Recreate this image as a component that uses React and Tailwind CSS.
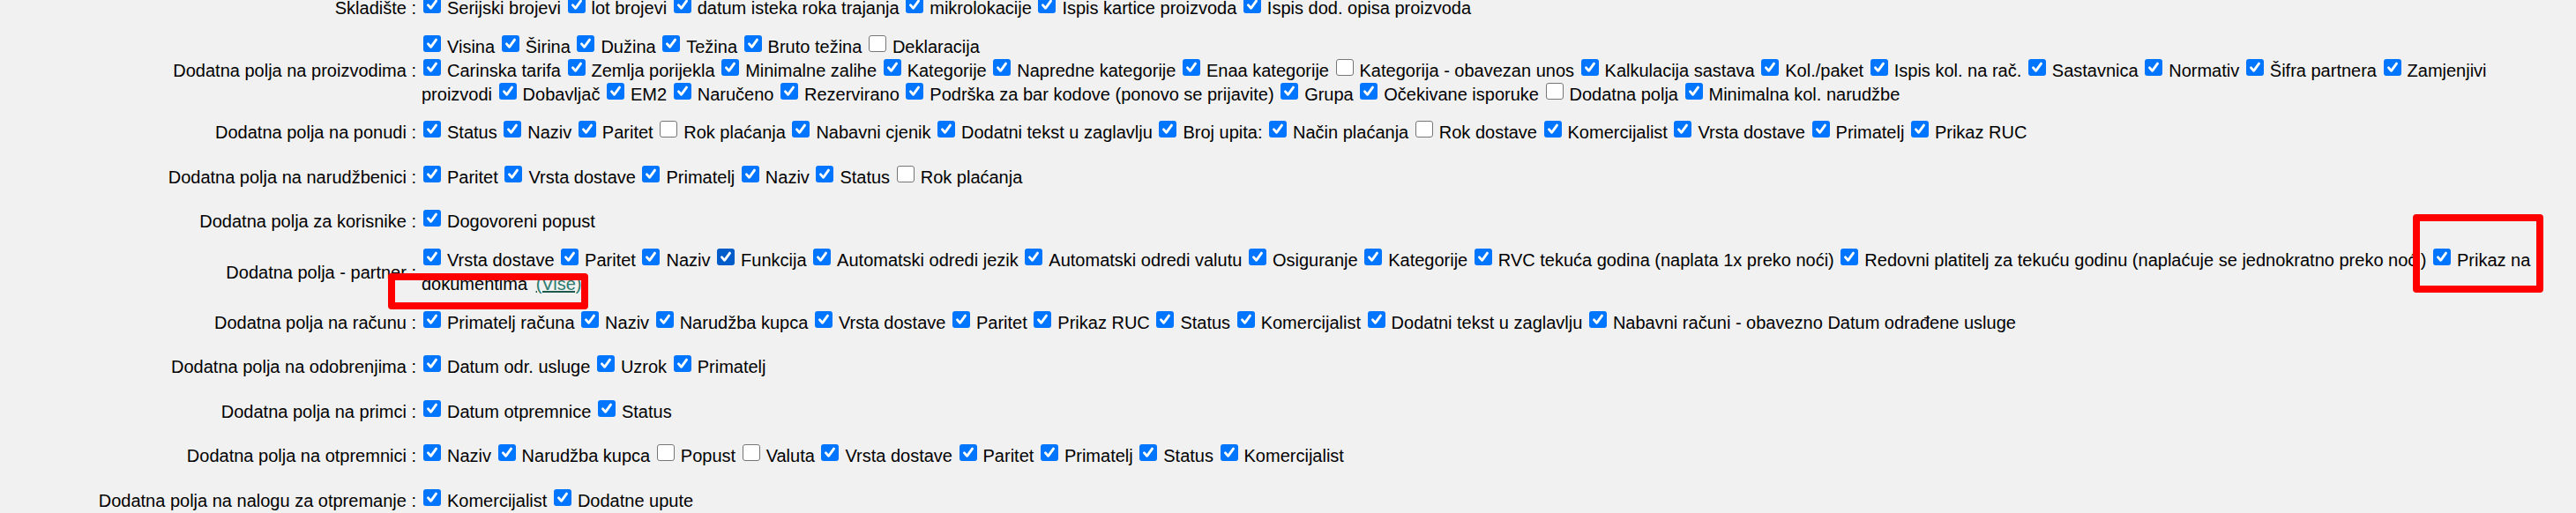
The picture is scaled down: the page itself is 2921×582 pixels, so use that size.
import React from "react";

// [tekst, uključeno, tamnije]
const rows = [
  {
    label: "Skladište :",
    items: [
      ["Serijski brojevi", true],
      ["lot brojevi", true],
      ["datum isteka roka trajanja", true],
      ["mikrolokacije", true],
      ["Ispis kartice proizvoda", true],
      ["Ispis dod. opisa proizvoda", true],
    ],
  },
  {
    label: "Dodatna polja na proizvodima :",
    items: [
      ["Visina", true],
      ["Širina", true],
      ["Dužina", true],
      ["Težina", true],
      ["Bruto težina", true],
      ["Deklaracija", false],
      "br",
      ["Carinska tarifa", true],
      ["Zemlja porijekla", true],
      ["Minimalne zalihe", true],
      ["Kategorije", true],
      ["Napredne kategorije", true],
      ["Enaa kategorije", true],
      ["Kategorija - obavezan unos", false],
      ["Kalkulacija sastava", true],
      ["Kol./paket", true],
      ["Ispis kol. na rač.", true],
      ["Sastavnica", true],
      ["Normativ", true],
      ["Šifra partnera", true],
      ["Zamjenjivi proizvodi", true],
      ["Dobavljač", true],
      ["EM2", true],
      ["Naručeno", true],
      ["Rezervirano", true],
      ["Podrška za bar kodove (ponovo se prijavite)", true],
      ["Grupa", true],
      ["Očekivane isporuke", true],
      ["Dodatna polja", false],
      ["Minimalna kol. narudžbe", true],
    ],
  },
  {
    label: "Dodatna polja na ponudi :",
    items: [
      ["Status", true],
      ["Naziv", true],
      ["Paritet", true],
      ["Rok plaćanja", false],
      ["Nabavni cjenik", true],
      ["Dodatni tekst u zaglavlju", true],
      ["Broj upita:", true],
      ["Način plaćanja", true],
      ["Rok dostave", false],
      ["Komercijalist", true],
      ["Vrsta dostave", true],
      ["Primatelj", true],
      ["Prikaz RUC", true],
    ],
  },
  {
    label: "Dodatna polja na narudžbenici :",
    items: [
      ["Paritet", true],
      ["Vrsta dostave", true],
      ["Primatelj", true],
      ["Naziv", true],
      ["Status", true],
      ["Rok plaćanja", false],
    ],
  },
  {
    label: "Dodatna polja za korisnike :",
    items: [["Dogovoreni popust", true]],
  },
  {
    label: "Dodatna polja - partner :",
    more: true,
    items: [
      ["Vrsta dostave", true],
      ["Paritet", true],
      ["Naziv", true],
      ["Funkcija", true, true],
      ["Automatski odredi jezik", true],
      ["Automatski odredi valutu", true],
      ["Osiguranje", true],
      ["Kategorije", true],
      ["RVC tekuća godina (naplata 1x preko noći)", true],
      ["Redovni platitelj za tekuću godinu (naplaćuje se jednokratno preko noći)", true],
      ["Prikaz na dokumentima", true],
    ],
  },
  {
    label: "Dodatna polja na računu :",
    items: [
      ["Primatelj računa", true],
      ["Naziv", true],
      ["Narudžba kupca", true],
      ["Vrsta dostave", true],
      ["Paritet", true],
      ["Prikaz RUC", true],
      ["Status", true],
      ["Komercijalist", true],
      ["Dodatni tekst u zaglavlju", true],
      ["Nabavni računi - obavezno Datum odrađene usluge", true],
    ],
  },
  {
    label: "Dodatna polja na odobrenjima :",
    items: [
      ["Datum odr. usluge", true],
      ["Uzrok", true],
      ["Primatelj", true],
    ],
  },
  {
    label: "Dodatna polja na primci :",
    items: [
      ["Datum otpremnice", true],
      ["Status", true],
    ],
  },
  {
    label: "Dodatna polja na otpremnici :",
    items: [
      ["Naziv", true],
      ["Narudžba kupca", true],
      ["Popust", false],
      ["Valuta", false],
      ["Vrsta dostave", true],
      ["Paritet", true],
      ["Primatelj", true],
      ["Status", true],
      ["Komercijalist", true],
    ],
  },
  {
    label: "Dodatna polja na nalogu za otpremanje :",
    items: [
      ["Komercijalist", true],
      ["Dodatne upute", true],
    ],
  },
];

function Box({ on, dark }) {
  if (!on) {
    return (
      <span className="inline-block align-baseline mb-[1px] ml-[2px] mr-[7px] w-[20px] h-[19px] rounded-[3px] border border-[#767676] bg-white" />
    );
  }
  return (
    <span
      className={
        dark
          ? "inline-block align-baseline mb-[1px] ml-[2px] mr-[7px] w-[20px] h-[19px] rounded-[3px] bg-[#005cc8]"
          : "inline-block align-baseline mb-[1px] ml-[2px] mr-[7px] w-[20px] h-[19px] rounded-[3px] bg-[#0075ff]"
      }
    >
      <svg viewBox="0 0 16 16" className="block w-full h-full">
        <path
          d="M4.2 8.3 L6.8 11.2 L11.8 4.3"
          fill="none"
          stroke="white"
          strokeWidth="2.4"
          strokeLinecap="round"
          strokeLinejoin="round"
        />
      </svg>
    </span>
  );
}

function Row({ row }) {
  return (
    <div className="flex items-center min-h-[50.5px]">
      <div className="w-[472px] shrink-0 text-right leading-[27px] whitespace-nowrap">
        {row.label}
      </div>
      <div className="flex-1 min-w-0 pl-[6px] pr-[21px] py-[5px] leading-[27px]">
        {row.items.map((it, i) => {
          if (it === "br") return <br key={i} />;
          const [text, on, dark] = it;
          return (
            <React.Fragment key={i}>
              <Box on={on} dark={dark} />
              {text}{" "}
            </React.Fragment>
          );
        })}
        {row.more && (
          <a href="#" className="ml-[4px] text-[#2a7b6f] underline decoration-[#1d5a4d]">
            (Više)
          </a>
        )}
      </div>
    </div>
  );
}

export default function App() {
  return (
    <div className="relative w-[2921px] h-[582px] overflow-hidden bg-[#f1f1f1] text-black text-[20px] font-['Liberation_Sans',Arial,sans-serif]">
      <div className="-mt-[16px]">
        {rows.map((row, i) => (
          <Row key={i} row={row} />
        ))}
      </div>

      {/* crvene oznake */}
      <div className="absolute left-[440px] top-[310px] w-[227px] h-[41px] border-[8px] border-[#ff0000] rounded-[4px]" />
      <div className="absolute left-[2736px] top-[243px] w-[148px] h-[89px] border-[8px] border-[#ff0000] rounded-[4px]" />
    </div>
  );
}
